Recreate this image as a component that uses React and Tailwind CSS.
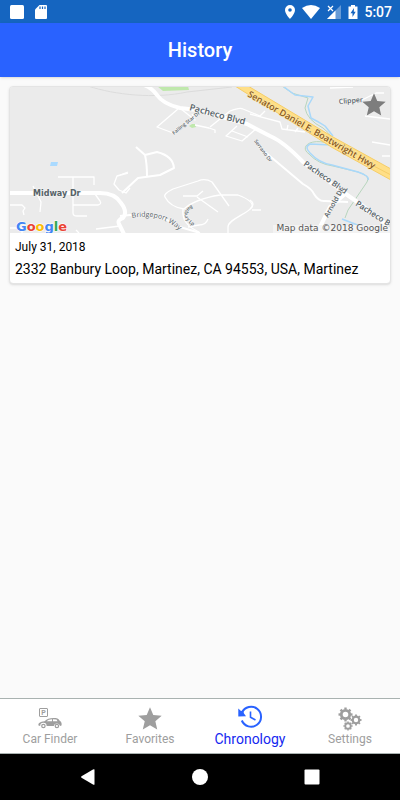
import React, { useState } from 'react'
import { clsx } from 'clsx'

const STAR = 'M12 17.3 18.2 21l-1.6-7L22 9.2l-7.2-.6L12 2 9.2 8.6 2 9.2 7.5 14l-1.700 7z'

const minorRoads = [
  'M58 178H94V186',
  'M73 178V214Q73 217 77 217H87',
  'M73 206H98Q102 205 100 202L95 195',
  'M33 187 41 203 40 213',
  'M9 206H22L25 209 23 212 24 216',
  'M128 174 117 177 114 185 119 191 126 194 130 189',
  'M120 176 128 173',
  'M9 229H22V234M76 231 79 234M96 230 120 227',
  'M178 110 157 128 173 134M181 110 195 121 192 115',
  'M210 128 230 112Q240 108 243 110L260 117',
  'M195 126 209 129 215 131 215 134',
  'M237 127 226 137 242 142 257 129M232 132 248 138',
  'M229 207 212 183Q205 179 198 182L173 190Q163 195 165 198 170 208 184 210 195 200 220 196L238 196Q254 202 252 208C248 215 228 220 228 228V234',
  'M183 197H197L203 192M197 198 218 213',
  'M208 220Q206 226 199 226L188 228',
  'M183 210C182 220 186 227 199 233',
  'M250 115 280 123 282 130 305 133M260 117 265 112M287 131 288 126M295 133 298 129',
  'M330 89 353 88M340 103 358 103 376 94 384 94',
  'M365 117 390 120M372 143 390 146M382 157 390 157',
  'M250 210Q256 205 250 201M252 211H261',
]

const localRoads = [
  'M136 148 145 156Q147 165 147 177M145 156 157 153Q173 157 174 169L160 176 138 179 122 194',
  'M120 217 140 215Q165 217 180 228L200 234',
  'M257 142Q258 147 265 153L303 185Q312 190 314 195 319 203 325 202L348 203',
]

const mainRoads = [
  'M9 194H100Q115 194 121 204 128 213 123 219 117 221 119 225L124 235',
  'M144 86Q152 89 157 96 163 105 180 109L197 111 247 125 270 137Q284 143 303 163L343 193 363 207 392 230',
  'M345 195 330 208 317 234',
]

const streetLabels = [
  { text: 'Pacheco Blvd', x: 189, y: 111, angle: 15, size: 9 },
  { text: 'Pacheco Blvd', x: 303, y: 166, angle: 35, size: 8 },
  { text: 'Pacheco Blv', x: 355, y: 206, angle: 33, size: 8 },
  { text: 'Arnold Dr', x: 328, y: 219, angle: -61, size: 7 },
  { text: 'Falling Star Dr', x: 174, y: 136, angle: -39, size: 5 },
  { text: 'Serrano Dr', x: 254, y: 142, angle: 54, size: 5 },
  { text: 'Clipper', x: 339, y: 105, angle: -5, size: 7 },
]

function MapPreview() {
  return (
    <svg
      viewBox="10 88 380 146"
      preserveAspectRatio="xMidYMid slice"
      className="block h-[146px] w-full bg-[#ebebeb]"
      role="img"
      aria-label="Map of Martinez"
    >
      <defs>
        <path id="bridgeport" d="M132 219Q162 213 182 234" />
        <path id="banbury" d="M192 206C179 211 184 226 200 229" />
      </defs>

      {/* Land */}
      <path d="M9 87H391V235H9Z" fill="#ebebeb" />
      <path d="M157 87 163 92 189 91 188 87Z" fill="#bfe8ac" />
      <path d="M189 127 192 125H195L196 128 192 129Z" fill="#bfe8ac" />
      <path d="M51 163H58L57 167H50Z" fill="#aadaff" />
      <path d="M88 87C115 96 155 100 187 93L232 88" fill="none" stroke="#dcdcdc" />

      {/* Creek */}
      <g fill="none" strokeLinejoin="round">
        <path
          d="M282 87 292 94 308 99 305 109Q307 121 323 129 329 134 331 137M331 145C310 138 299 148 309 155Q318 165 333 167L358 173Q371 177 367 183L348 211 345 219"
          stroke="#b7d5bd"
        />
        <path
          d="M284 88 295 96 313 98 308 107 311 119Q319 123 325 127L333 137M332 146 310 145Q304 148 310 154 319 164 332 166L358 173Q370 177 368 181M342 220 360 227"
          stroke="#a9d8fa"
          strokeWidth="1.5"
        />
      </g>

      {/* Roads */}
      <g fill="none" stroke="#fff" strokeLinejoin="round">
        {minorRoads.map((d) => (
          <path key={d} d={d} strokeWidth="1.3" />
        ))}
        {localRoads.map((d) => (
          <path key={d} d={d} strokeWidth="2" />
        ))}
        {mainRoads.map((d) => (
          <path key={d} d={d} strokeWidth="4" />
        ))}
      </g>
      <path d="M235 87 262 104 333 149 391 181V170L333 138 283 108 248 87Z" fill="#ffdf87" />
      <path d="M235 87 262 104 333 149 391 181M248 87 283 108 333 138 391 170" fill="none" stroke="#f5cd68" />
      <path d="M368 164 391 176" stroke="#f5cd68" />

      {/* Labels */}
      <g className="font-['Open_Sans',sans-serif]" fill="#566267" stroke="#f4f4f4" paintOrder="stroke">
        <text transform="translate(247 97) rotate(30)" fontSize="9" fontWeight="600" fill="#8a5a1c" stroke="#ffe9ab">
          Senator Daniel E. Boatwright Hwy
        </text>
        <text fontSize="8" fontWeight="700" className="font-['DejaVu_Sans',sans-serif]" x="33" y="197">
          Midway Dr
        </text>
        {streetLabels.map(({ text, x, y, angle, size }) => (
          <text key={`${x}-${y}`} transform={`translate(${x} ${y}) rotate(${angle})`} fontSize={size} fontWeight="600">
            {text}
          </text>
        ))}
        <text fontSize="7"><textPath href="#bridgeport">Bridgeport Way</textPath></text>
        <text fontSize="5" fontWeight="600"><textPath href="#banbury">Banbury Lp</textPath></text>
      </g>

      {/* Attribution */}
      <text x="16" y="232" fontSize="13" fontWeight="700" className="font-['DejaVu_Sans',sans-serif]" stroke="#fff" paintOrder="stroke">
        <tspan fill="#4285f4">G</tspan>
        <tspan fill="#ea4335">o</tspan>
        <tspan fill="#fbbc05">o</tspan>
        <tspan fill="#4285f4">g</tspan>
        <tspan fill="#34a853">l</tspan>
        <tspan fill="#ea4335">e</tspan>
      </text>
      <path d="M273 226H391V235H273Z" fill="#f5f5f5" fillOpacity="0.8" />
      <text x="388" y="232" textAnchor="end" fontSize="9" fill="#555" className="font-['DejaVu_Sans',sans-serif]">
        Map data ©2018 Google
      </text>
    </svg>
  )
}

function StatusBar() {
  return (
    <div className="flex h-[23px] items-center justify-between bg-[#1565c0] px-2 text-white">
      <div className="flex items-center gap-2.5">
        <svg width="16" height="16" viewBox="0 0 16 16" fill="currentColor">
          <rect x="2" y="1" width="14" height="14" rx="1.5" />
        </svg>
        <svg width="14" height="16" viewBox="0 0 14 16">
          <path d="M5.5 1H12Q13 1 13 2V14Q13 15 12 15H2Q1 15 1 14V5.5Z" fill="currentColor" />
          <path d="M6 2.5V5M8.5 2.5V5M11 2.5V5" stroke="#1565c0" strokeWidth="1.2" />
        </svg>
      </div>
      <div className="flex items-center gap-1.5">
        <svg width="12" height="16" viewBox="0 0 12 16">
          <path d="M6 1a5 5 0 0 0-5 5c0 3.700 5 9 5 9s5-5.300 5-9a5 5 0 0 0-5-5zm0 3.200a1.800 1.800 0 1 1 0 3.600 1.800 1.800 0 0 1 0-3.600z" fill="currentColor" fillRule="evenodd" />
        </svg>
        <svg width="18" height="16" viewBox="0 0 18 16">
          <path d="M0 4Q9-2 18 4L9 15Z" fill="currentColor" />
        </svg>
        <svg width="16" height="16" viewBox="0 0 16 16">
          <path d="M15 1V15H1Z" fill="currentColor" fillOpacity="0.35" />
          <path d="M9.5 6.5V15H1Z" fill="currentColor" />
          <path d="M2 2 7 7M7 2 2 7" stroke="#1565c0" strokeWidth="3" />
          <path d="M2 2 7 7M7 2 2 7" stroke="currentColor" strokeWidth="1.2" />
        </svg>
        <svg width="10" height="16" viewBox="0 0 10 16">
          <path d="M3 1h4v1.500h2.500V15h-9V2.500H3z" fill="currentColor" />
          <path d="M6 4 2.500 9.200H4.500V13L7.700 7.800H5.800Z" fill="#1565c0" />
        </svg>
        <span className="text-sm font-medium">5:07</span>
      </div>
    </div>
  )
}

function CarIcon() {
  return (
    <svg width="26" height="24" viewBox="0 0 26 24" fill="currentColor">
      <rect x="2.500" y="1.500" width="8" height="8" rx="0.500" fill="none" stroke="currentColor" />
      <text x="6.500" y="8" fontSize="7" fontWeight="700" textAnchor="middle">P</text>
      <path
        fillRule="evenodd"
        d="M1.500 18.500C1 16 3 15 7.500 14.300 10 12 12.500 11 16.500 11 20 11 21.500 11.300 22.500 13.500 24.500 14.500 25 16.500 24.500 18.500L23 19A3.200 3.200 0 0 0 16.800 19H9.600A3.200 3.200 0 0 0 3.200 19ZM9.500 14.300H15V12.200C12.500 12.200 11 13 9.500 14.300ZM16 14.300H20.500L19.500 12.500 16 12.200Z"
      />
      <circle cx="6.400" cy="19" r="1.700" fill="none" stroke="currentColor" strokeWidth="1.200" />
      <circle cx="19.900" cy="19" r="1.700" fill="none" stroke="currentColor" strokeWidth="1.200" />
    </svg>
  )
}

function StarIcon() {
  return (
    <svg width="28" height="28" viewBox="0 0 24 24" fill="currentColor">
      <path d={STAR} />
    </svg>
  )
}

function HistoryIcon() {
  return (
    <svg width="26" height="24" viewBox="0 0 26 24" fill="none" stroke="currentColor">
      <path d="M5 7.500A10 10 0 1 1 4.800 15.500" strokeWidth="2" />
      <path d="M1.300 3.500 4 6 6 5.500 7 8.500 9 11.300 1.300 11.500Z" fill="currentColor" stroke="none" />
      <path d="M13.500 6.500V12.200L18.500 15" strokeWidth="1.600" />
    </svg>
  )
}

function Gear({ x, y, r }) {
  return (
    <g transform={`translate(${x} ${y})`} stroke="currentColor" fill="none">
      <circle r={r * 0.6} strokeWidth={r * 0.4} />
      {[0, 45, 90, 135, 180, 225, 270, 315].map((angle) => (
        <path key={angle} d={`M0 ${-r * 0.7}V${-r}`} strokeWidth={r * 0.34} transform={`rotate(${angle})`} />
      ))}
    </g>
  )
}

function GearsIcon() {
  return (
    <svg width="26" height="24" viewBox="0 0 26 24">
      <Gear x={8.5} y={7.5} r={7} />
      <Gear x={19} y={13} r={5.5} />
      <Gear x={11} y={19} r={4.6} />
    </svg>
  )
}

const tabs = [
  { id: 'finder', label: 'Car Finder', icon: <CarIcon /> },
  { id: 'favorites', label: 'Favorites', icon: <StarIcon /> },
  { id: 'chronology', label: 'Chronology', icon: <HistoryIcon /> },
  { id: 'settings', label: 'Settings', icon: <GearsIcon /> },
]

const entries = [
  { date: 'July 31, 2018', address: '2332 Banbury Loop, Martinez, CA 94553, USA, Martinez' },
]

export default function App() {
  const [active, setActive] = useState('chronology')

  return (
    <div className="flex min-h-screen flex-col bg-[#fafafa] font-[Roboto,sans-serif] text-black">
      <StatusBar />

      <header className="flex h-[54px] items-center justify-center bg-[#2962ff] text-white shadow-sm">
        <h1 className="text-xl font-medium">History</h1>
      </header>

      <main className="flex-1 p-[9px]">
        {entries.map((entry) => (
          <article key={entry.date} className="relative overflow-hidden rounded-sm border border-[#e4e4e4] bg-white shadow-sm">
            <MapPreview />
            <button type="button" aria-label="Add to favorites" className="absolute top-1 right-0.5 text-[#7d7d7d]">
              <StarIcon />
            </button>
            <div className="flex flex-col gap-[3px] px-[5px] pt-[5px] pb-1">
              <time className="text-xs leading-[18px]">{entry.date}</time>
              <p className="text-sm leading-5">{entry.address}</p>
            </div>
          </article>
        ))}
      </main>

      <nav className="grid h-14 grid-cols-4 border-y border-[#a9b2b0] bg-white">
        {tabs.map((tab) => (
          <button
            key={tab.id}
            type="button"
            onClick={() => setActive(tab.id)}
            className={clsx(
              'flex flex-col items-center',
              active === tab.id ? 'gap-0.5 pt-1.5 text-[#2962ff]' : 'pt-2 text-[#9e9e9e]'
            )}
          >
            <span className="flex h-6 items-center">{tab.icon}</span>
            <span className={clsx('leading-4', active === tab.id ? 'text-sm text-[#1528f0]' : 'text-xs')}>
              {tab.label}
            </span>
          </button>
        ))}
      </nav>

      {/* Android navigation keys */}
      <div className="flex h-[46px] items-center justify-center gap-24 bg-black text-white">
        <button type="button" aria-label="Back">
          <svg width="16" height="16" viewBox="0 0 16 16" fill="currentColor">
            <path d="M14.500 0.500V15.500Q14 16 13 15.500L1.500 8.700Q0.500 8 1.500 7.300L13 0.500Q14 0 14.500 0.500Z" />
          </svg>
        </button>
        <button type="button" aria-label="Home">
          <svg width="16" height="16" viewBox="0 0 16 16" fill="currentColor">
            <circle cx="8" cy="8" r="8" />
          </svg>
        </button>
        <button type="button" aria-label="Recent apps">
          <svg width="16" height="16" viewBox="0 0 16 16" fill="currentColor">
            <rect x="0.500" y="0.500" width="15" height="15" rx="1" />
          </svg>
        </button>
      </div>
    </div>
  )
}
